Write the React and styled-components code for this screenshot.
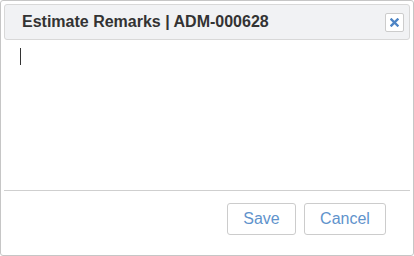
import styled, { createGlobalStyle } from "styled-components"

const Global = createGlobalStyle`
  html, body { margin: 0; padding: 0; background: #fff; }
  body { font-family: "Liberation Sans", Arial, sans-serif; }
  * { box-sizing: border-box; }
`

const Dialog = styled.div`
  width: 414px;
  height: 256px;
  border: 1px solid #c6c6c6;
  border-radius: 3px;
  padding: 3px;
  display: flex;
  flex-direction: column;
  background: #fff;
`

const Header = styled.div`
  height: 36px;
  flex-shrink: 0;
  border: 1px solid #d8d8d8;
  border-radius: 3px;
  background: #f1f2f4;
  display: flex;
  align-items: center;
  justify-content: space-between;
  padding: 0 5px 0 17px;
`

const Title = styled.div`
  font-size: 16px;
  font-weight: bold;
  color: #333;
`

const CloseButton = styled.button`
  width: 19px;
  height: 19px;
  padding: 0;
  margin-top: 1px;
  border: 1px solid #cccccc;
  border-radius: 2px;
  background: #fff;
  display: flex;
  align-items: center;
  justify-content: center;
  cursor: pointer;
`

const Body = styled.div`
  flex: 1;
  display: flex;
  position: relative;
`

const Remarks = styled.textarea`
  flex: 1;
  border: 0 none;
  outline: 0 none;
  resize: none;
  padding: 8px 15px;
  font-family: "Liberation Sans", Arial, sans-serif;
  font-size: 14px;
  color: #333;
  background: transparent;
`

// static text cursor shown in the empty remarks box
const Caret = styled.span`
  position: absolute;
  left: 16px;
  top: 8px;
  width: 1px;
  height: 17px;
  background: #333;
  pointer-events: none;
`

const Divider = styled.div`
  height: 1px;
  flex-shrink: 0;
  background: #cfcfcf;
`

const Footer = styled.div`
  display: flex;
  justify-content: flex-end;
  gap: 8px;
  padding: 12px 24px 17px 0;
`

const Button = styled.button`
  height: 32px;
  width: ${p => p.$w}px;
  border: 1px solid #cccccc;
  border-radius: 3px;
  background: #fff;
  color: #5f93cc;
  font-family: "Liberation Sans", Arial, sans-serif;
  font-size: 16px;
  cursor: pointer;
`

const App = () => {
  return (
    <>
      <Global />
      <Dialog>
        <Header>
          <Title>Estimate Remarks | ADM-000628</Title>
          <CloseButton aria-label="close">
            <svg width="9" height="9" viewBox="0 0 9 9">
              <path d="M1.5 1.5 L7.5 7.5 M7.5 1.5 L1.5 7.5" stroke="#4d84c5" strokeWidth="2.4" strokeLinecap="square" />
            </svg>
          </CloseButton>
        </Header>
        <Body>
          <Remarks />
          <Caret />
        </Body>
        <Divider />
        <Footer>
          <Button $w={69}>Save</Button>
          <Button $w={82}>Cancel</Button>
        </Footer>
      </Dialog>
    </>
  )
}

export default App
